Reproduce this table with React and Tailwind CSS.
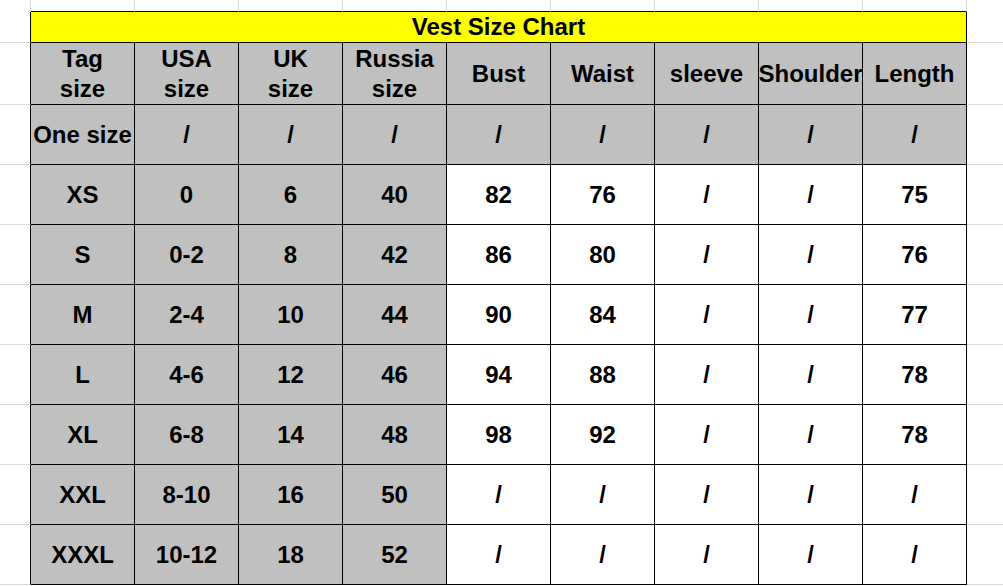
const GRID = 'border-[#dadada]'

const header = [['Tag', 'size'], ['USA', 'size'], ['UK', 'size'], ['Russia', 'size'], ['Bust'], ['Waist'], ['sleeve'], ['Shoulder'], ['Length']]

const rows = [
  ['One size', '/', '/', '/', '/', '/', '/', '/', '/'],
  ['XS', '0', '6', '40', '82', '76', '/', '/', '75'],
  ['S', '0-2', '8', '42', '86', '80', '/', '/', '76'],
  ['M', '2-4', '10', '44', '90', '84', '/', '/', '77'],
  ['L', '4-6', '12', '46', '94', '88', '/', '/', '78'],
  ['XL', '6-8', '14', '48', '98', '92', '/', '/', '78'],
  ['XXL', '8-10', '16', '50', '/', '/', '/', '/', '/'],
  ['XXXL', '10-12', '18', '52', '/', '/', '/', '/', '/'],
]

function Row({ height, children }) {
  return (
    <div className={`flex ${height}`}>
      <div className={`w-[31px] shrink-0 border-r border-r-black border-b ${GRID}`} />
      {children}
      <div className={`flex-1 border-b ${GRID}`} />
    </div>
  )
}

function Cell({ grey, children }) {
  return (
    <div
      className={`flex w-[104px] shrink-0 items-center justify-center overflow-hidden whitespace-nowrap border-r border-b border-black ${
        grey ? 'bg-[#c0c0c0]' : 'bg-white'
      }`}
    >
      {children}
    </div>
  )
}

export default function App() {
  return (
    <div
      className="h-[586px] w-[1003px] overflow-hidden bg-white text-[24px] font-bold text-black"
      style={{ fontFamily: '"Liberation Sans", Arial, sans-serif' }}
    >
      {/* strip above the table */}
      <div className="flex h-[12px]">
        <div className={`w-[31px] shrink-0 border-r ${GRID}`} />
        {header.map((_, i) => (
          <div key={i} className={`w-[104px] shrink-0 border-r border-b border-b-black ${GRID}`} />
        ))}
        <div className="flex-1" />
      </div>

      <Row height="h-[31px]">
        <div className="flex w-[936px] shrink-0 items-center justify-center border-r border-b border-black bg-[#ffff00] leading-none">
          Vest Size Chart
        </div>
      </Row>

      <Row height="h-[62px]">
        {header.map((lines, i) => (
          <Cell key={i} grey>
            <div className="flex flex-col items-center leading-[30px]">
              {lines.map((l) => (
                <span key={l}>{l}</span>
              ))}
            </div>
          </Cell>
        ))}
      </Row>

      {rows.map((r, ri) => (
        <Row key={ri} height="h-[60px]">
          {r.map((v, ci) => (
            <Cell key={ci} grey={ri === 0 || ci < 4}>
              {v}
            </Cell>
          ))}
        </Row>
      ))}
    </div>
  )
}
